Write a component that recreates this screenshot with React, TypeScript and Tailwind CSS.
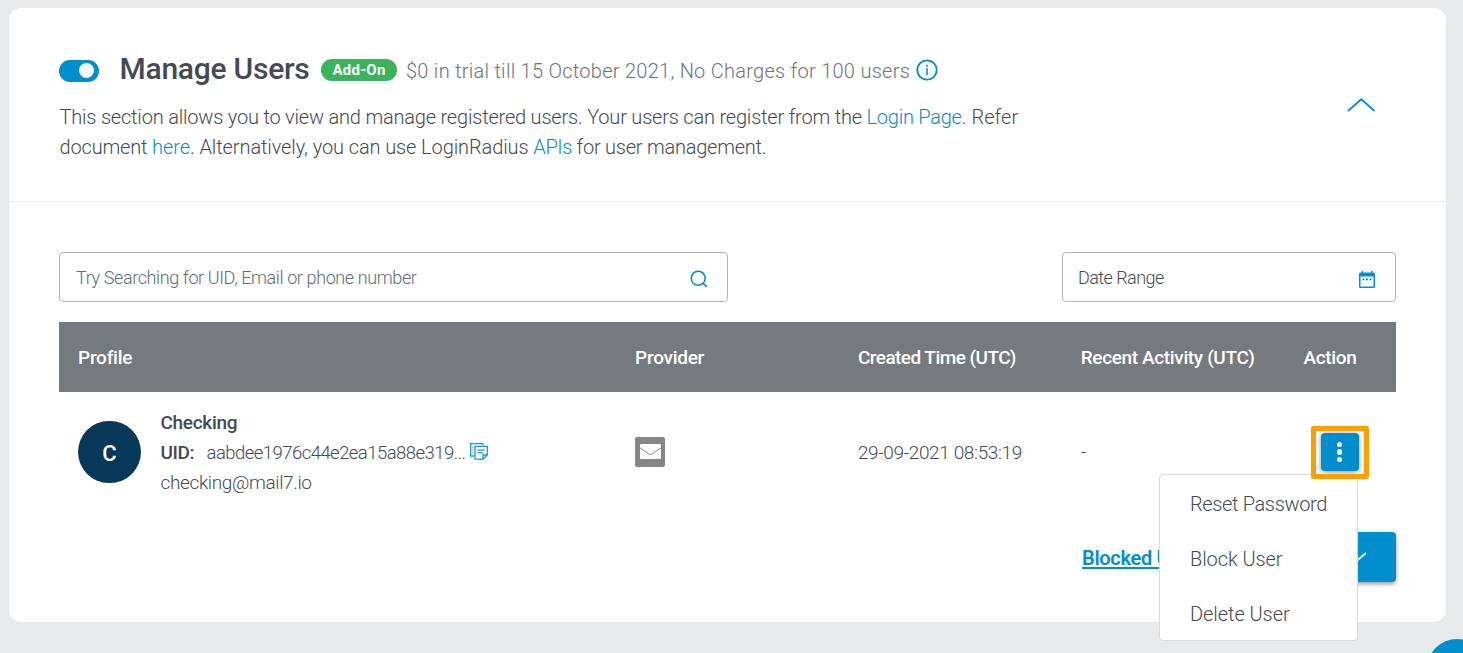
import type { ReactNode } from "react";

const columns = [
  { label: "Profile", style: "col-span-5 tracking-[-0.25px]" },
  { label: "Provider", style: "col-span-2 tracking-[-0.27px]" },
  { label: "Created Time (UTC)", style: "col-span-2 tracking-[-0.55px]" },
  { label: "Recent Activity (UTC)", style: "col-span-2 tracking-[-0.36px]" },
  { label: "Action", style: "col-span-1 tracking-[-0.36px]" },
];

const actions = [
  { label: "Reset Password", style: "tracking-[-0.36px]" },
  { label: "Block User", style: "tracking-[-0.08px]" },
  { label: "Delete User", style: "tracking-[-0.06px]" },
];

function Link({ children, className = "" }: { children: ReactNode; className?: string }) {
  return <a className={`text-[#008ecf] ${className}`}>{children}</a>;
}

function InfoIcon() {
  return (
    <svg className="ml-[6px] mt-[2px] h-[22px] w-[22px] text-[#008ecf]" viewBox="0 0 22 22" fill="none">
      <circle cx="11" cy="11" r="9.7" stroke="currentColor" strokeWidth="1.8" />
      <rect x="10.2" y="9.2" width="1.6" height="6.8" fill="currentColor" />
      <rect x="10.1" y="5.8" width="1.8" height="1.8" fill="currentColor" />
    </svg>
  );
}

function SearchIcon() {
  return (
    <svg className="h-[18px] w-[18px]" viewBox="0 0 18 18" fill="none" stroke="#008ecf" strokeWidth="1.6">
      <circle cx="8.2" cy="8.3" r="7" />
      <path d="M13 13.2 L17 17" />
    </svg>
  );
}

function CalendarIcon() {
  return (
    <svg className="h-[18px] w-4" viewBox="0 0 16 18" fill="#008ecf">
      <path
        fillRule="evenodd"
        d="M2.5 1h1.5v1.500h8V1h1.500v1.500h1A1.500 1.500 0 0 1 16 4v12.500a1.500 1.500 0 0 1-1.500 1.500h-13A1.500 1.500 0 0 1 0 16.500V4a1.500 1.500 0 0 1 1.500-1.500h1zM1.500 6.500v10h13v-10z"
      />
      <path d="M3.500 8.500h2v1.700h-2zM7 8.500h2v1.700H7zM10.500 8.500h2v1.700h-2z" />
    </svg>
  );
}

function CopyIcon() {
  return (
    <svg className="ml-[3px] mt-[-3px] h-[17px] w-[18px]" viewBox="0 0 18 17" fill="none" stroke="#199ad6" strokeWidth="1.3">
      <path d="M13 2.300V.7H.7v12.300h3.400" />
      <path d="M2.400 4.200h1.200M2.400 7h1.200M2.400 9.800h1.200" strokeWidth="1" />
      <path d="M5 3.400h12.300v8.600l-4 4.200H5zM13 16.200V12h4.300" />
      <path d="M7.400 7.200h7.200M7.400 9.900h6" />
    </svg>
  );
}

function MailIcon() {
  return (
    <svg className="h-[30px] w-[30px]" viewBox="0 0 30 30">
      <rect width="30" height="30" rx="2" fill="#868686" />
      <rect x="5" y="7" width="21" height="15" rx="1" fill="#fff" />
      <path d="M5 10.800l9 6.300q1.500.9 3 0l9-6.300" fill="none" stroke="#868686" strokeWidth="1" />
    </svg>
  );
}

export default function App() {
  return (
    <div className="relative h-[653px] w-full overflow-hidden bg-[#e7e9eb] pl-[9px] pr-[17px] pt-2 font-['Roboto',sans-serif] text-[#434b50]">
      <main className="h-[614px] rounded-xl bg-white">
        <header className="flex h-[194px] justify-between border-b border-[#e7e9eb] pl-[50px] pt-[41px]">
          <div>
            <div className="flex h-10 items-center">
              <button className="mt-[3px] flex h-[22px] w-10 items-center justify-end rounded-full bg-[#008ecf] pr-[5px]">
                <span className="h-[15px] w-[15px] rounded-full bg-white" />
              </button>
              <h1 className="ml-[20.5px] w-[190.5px] whitespace-nowrap text-[30px] font-medium leading-10 tracking-[-0.25px]">
                Manage Users
              </h1>
              <span className="ml-[11px] mt-px flex h-[22px] w-[76px] items-center justify-center rounded-full bg-[#3ab45b] pt-px text-[15px] font-bold leading-none tracking-[0.25px] text-white">
                Add-On
              </span>
              <span className="ml-[9px] mt-[3px] whitespace-nowrap text-xl font-light tracking-[0.27px] text-[#6d7479]">
                $0 in trial till 15 October 2021, No Charges for 100 users
              </span>
              <InfoIcon />
            </div>
            <p className="ml-[0.5px] mt-[13px] whitespace-pre text-xl font-light leading-[30px] tracking-[-0.2px]">
              This section allows you to view and manage registered users. Your users can register from the{" "}
              <Link className="tracking-[-0.25px]">Login Page</Link>
              <span className="tracking-[0.05px]">. Refer</span>
              <br />
              <span className="tracking-[-0.17px]">document </span>
              <Link className="tracking-[-0.05px]">here</Link>
              <span className="tracking-[-0.1px]">. Alternatively, you can use LoginRadius </span>
              <Link className="tracking-[-0.4px]">APIs</Link>
              <span className="tracking-[-0.24px]"> for user management.</span>
            </p>
          </div>
          <svg className="mr-[70px] mt-12 h-4 w-[30px]" viewBox="0 0 30 16" fill="none">
            <path d="M2 14 L15.300 2.300 L28.500 14" stroke="#008ecf" strokeWidth="1.8" />
          </svg>
        </header>

        <section className="px-[50px] pt-[50px]">
          <div className="flex justify-between">
            <div className="flex h-[50px] w-[669px] items-center justify-between rounded border border-[#b3b4b6] pl-4 pr-[19px]">
              <span className="mt-[2px] text-lg font-light tracking-[-0.39px] text-[#606b75]">
                Try Searching for UID, Email or phone number
              </span>
              <span className="mt-1"><SearchIcon /></span>
            </div>
            <div className="flex h-[50px] w-[334px] items-center justify-between rounded border border-[#b3b4b6] pl-[15px] pr-5">
              <span className="mt-[2px] text-lg font-light tracking-[-0.55px]">Date Range</span>
              <span className="mt-[3px]"><CalendarIcon /></span>
            </div>
          </div>

          <div className="mt-5 grid h-[70px] grid-cols-12 items-center bg-[#757a7e] pt-[2px] text-[19px] font-medium text-white">
            {columns.map((c) => (
              <div key={c.label} className={`whitespace-nowrap pl-[19px] ${c.style}`}>
                {c.label}
              </div>
            ))}
          </div>

          <div className="mt-[14px] grid h-[92px] grid-cols-12 items-center text-[19px] leading-[30px]">
            <div className="col-span-5 flex items-center pl-[19px]">
              <div className="flex h-[62px] w-[63px] items-center justify-center rounded-full bg-[#073857] pt-[3px] text-[22px] font-medium text-white">
                C
              </div>
              <div className="ml-[19.5px] pt-[2px] font-light">
                <div className="font-medium tracking-[-0.3px]">Checking</div>
                <div className="flex items-center">
                  <span className="w-[46px] font-medium tracking-[-0.4px]">UID:</span>
                  <span className="w-[260px] text-[18.5px] tracking-[-0.54px]">aabdee1976c44e2ea15a88e319...</span>
                  <CopyIcon />
                </div>
                <div className="tracking-[-0.37px]">checking@mail7.io</div>
              </div>
            </div>
            <div className="col-span-2 pl-[19px]"><MailIcon /></div>
            <div className="col-span-2 pl-[19px] pt-px font-light tracking-[-0.37px]">29-09-2021 08:53:19</div>
            <div className="col-span-2 pl-[19px] font-light">-</div>
            <div className="relative col-span-1 flex h-full items-center pl-9">
              <button className="flex h-[38px] w-[38px] flex-col items-center justify-center gap-[2px] rounded bg-[#008ecf] shadow-[0_1px_5px_rgba(0,0,0,0.45)]">
                <span className="h-[5.5px] w-[5.5px] rounded-full bg-white" />
                <span className="h-[5.5px] w-[5.5px] rounded-full bg-white" />
                <span className="h-[5.5px] w-[5.5px] rounded-full bg-white" />
              </button>
              <div className="absolute left-[26px] top-5 z-20 h-[53px] w-[58px] rounded-[2px] border-[5px] border-[#ff9d05]" />
              <ul className="absolute right-[38px] top-[68px] z-10 h-[167px] w-[199px] rounded border border-[#d9dadb] bg-white pl-[30px] pt-px text-xl font-light">
                {actions.map((a) => (
                  <li key={a.label} className={`flex h-[55px] items-center whitespace-nowrap ${a.style}`}>
                    {a.label}
                  </li>
                ))}
              </ul>
            </div>
          </div>

          <div className="mt-[34px] flex items-center justify-end">
            <a className="w-[213px] whitespace-nowrap pt-px text-xl font-semibold tracking-[-0.3px] text-[#008ecf] underline decoration-2 underline-offset-[2px]">
              Blocked Users
            </a>
            <button className="flex h-[50px] w-[101px] items-center justify-end rounded bg-[#008ecf] pr-[29px] shadow-[0_2px_4px_rgba(0,0,0,0.4)]">
              <svg className="h-3 w-5" viewBox="0 0 20 12" fill="none">
                <path d="M1 2 L9.500 10 L19 2" stroke="#fff" strokeWidth="1.7" />
              </svg>
            </button>
          </div>
        </section>
      </main>
      <button className="absolute left-[1427px] top-[639px] h-[60px] w-[60px] rounded-full bg-[#008ecf]" />
    </div>
  );
}
